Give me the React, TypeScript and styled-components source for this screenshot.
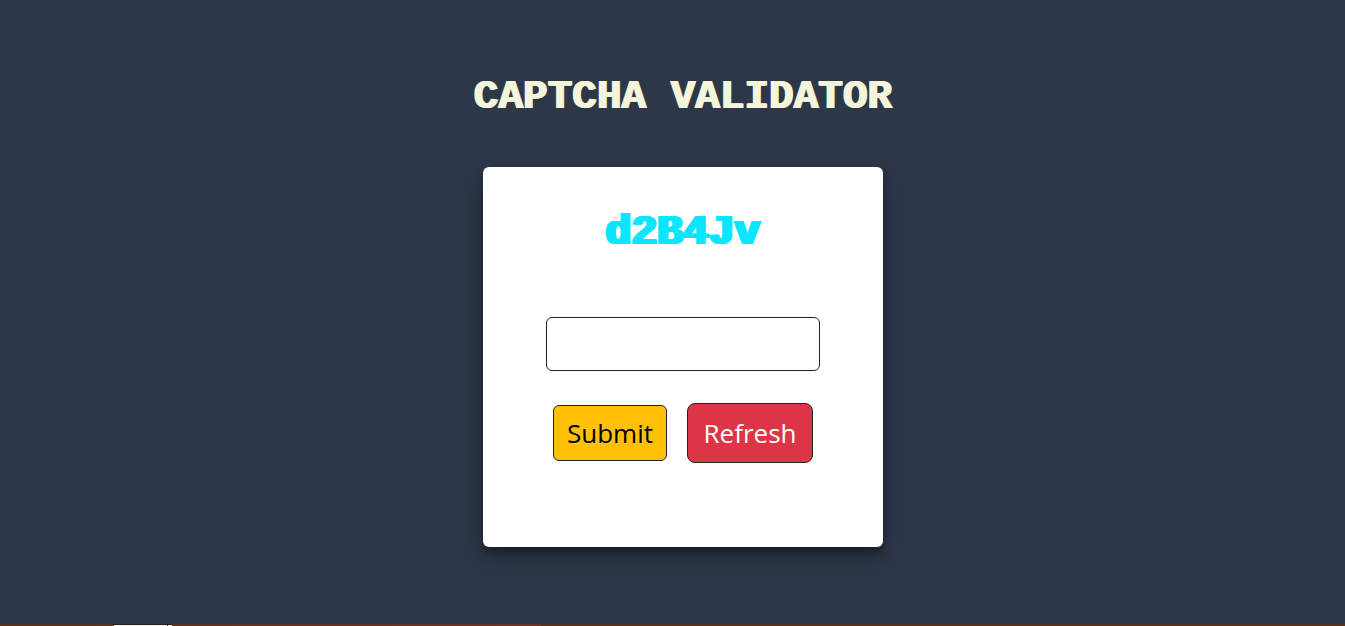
import React, { useState } from "react";
import styled, { createGlobalStyle } from "styled-components";

const GlobalStyle = createGlobalStyle`
  * { box-sizing: border-box; }
  html, body, #root { height: 100%; }
  body { margin: 0; background: #2d3748; font-family: "Open Sans", "Noto Sans", sans-serif; }
`;

const Page = styled.div`
  min-height: 100%;
  display: flex;
  flex-direction: column;
`;

const Main = styled.main`
  flex: 1;
  display: flex;
  flex-direction: column;
  align-items: center;
  gap: 46px;
  padding: 73px 0 40px 21px;
`;

const Title = styled.h1`
  margin: 0;
  color: #f5f5dc;
  font-family: "Liberation Mono", monospace;
  font-size: 41px;
  font-weight: 700;
  line-height: 48px;
  text-shadow: 1px 0 currentColor, -1px 0 currentColor;
`;

const Card = styled.form`
  width: 400px;
  max-width: 100%;
  min-height: 380px;
  display: flex;
  flex-direction: column;
  align-items: center;
  padding: 42px 24px 40px;
  background: #fff;
  border-radius: 6px;
  box-shadow: 0 10px 20px rgba(0, 0, 0, 0.3), 0 6px 6px rgba(0, 0, 0, 0.23);
`;

const Code = styled.output`
  color: #0ae6ff;
  font-family: "Liberation Mono", monospace;
  font-size: 43px;
  font-weight: 700;
  line-height: 48px;
  text-shadow: 1px 0 currentColor, -1px 0 currentColor, 2px 0 currentColor,
    -2px 0 currentColor;
`;

const Answer = styled.input`
  width: 274px;
  height: 54px;
  margin: 60px 0 32px;
  padding: 4px 12px;
  border: 1px solid #212529;
  border-radius: 6px;
  background: #fff;
  color: #212529;
  font: inherit;
  font-size: 26px;
`;

const Actions = styled.div`
  display: flex;
  align-items: center;
  gap: 20px;
`;

const Button = styled.button<{ $tone: "warning" | "danger" }>`
  width: ${(p) => (p.$tone === "warning" ? 114 : 126)}px;
  height: ${(p) => (p.$tone === "warning" ? 56 : 60)}px;
  padding: 0;
  border: 1px solid #212529;
  border-radius: ${(p) => (p.$tone === "warning" ? 6 : 8)}px;
  background: ${(p) => (p.$tone === "warning" ? "#ffc107" : "#dc3545")};
  color: ${(p) => (p.$tone === "warning" ? "#000" : "#fff")};
  font: inherit;
  font-size: 26px;
  cursor: pointer;
`;

const BottomBar = styled.footer`
  display: flex;
  height: 2px;
  padding-left: 113px;
  background: linear-gradient(90deg, #55301f, #6b3325 541px, #55301f 541px);
`;

const BarTab = styled.span<{ $width: number }>`
  width: ${(p) => p.$width}px;
  border: 1px solid #2d1f1c;
  border-bottom: 0;
  border-right: 0;
  background: #f5f0ee;
`;

export default function App() {
  const [answer, setAnswer] = useState("");
  return (
    <>
      <GlobalStyle />
      <Page>
        <Main>
          <Title>CAPTCHA VALIDATOR</Title>
          <Card onSubmit={(e) => e.preventDefault()}>
            <Code htmlFor="answer">d2B4Jv</Code>
            <Answer
              id="answer"
              aria-label="Captcha text"
              autoComplete="off"
              value={answer}
              onChange={(e) => setAnswer(e.target.value)}
            />
            <Actions>
              <Button type="submit" $tone="warning">Submit</Button>
              <Button type="button" $tone="danger" onClick={() => setAnswer("")}>
                Refresh
              </Button>
            </Actions>
          </Card>
        </Main>
        <BottomBar>
          <BarTab $width={54} />
          <BarTab $width={5} />
        </BottomBar>
      </Page>
    </>
  );
}
